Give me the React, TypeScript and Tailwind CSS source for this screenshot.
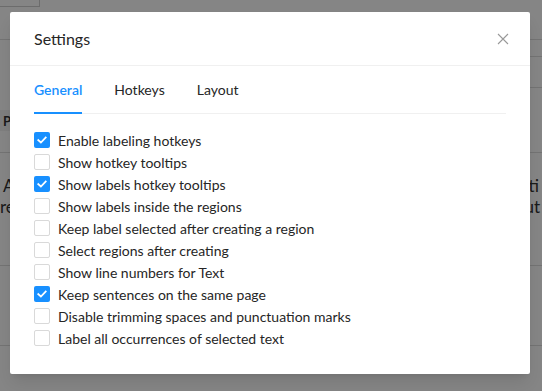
import { useState } from "react";

const OPTIONS: { label: string; checked: boolean }[] = [
  { label: "Enable labeling hotkeys", checked: true },
  { label: "Show hotkey tooltips", checked: false },
  { label: "Show labels hotkey tooltips", checked: true },
  { label: "Show labels inside the regions", checked: false },
  { label: "Keep label selected after creating a region", checked: false },
  { label: "Select regions after creating", checked: false },
  { label: "Show line numbers for Text", checked: false },
  { label: "Keep sentences on the same page", checked: true },
  { label: "Disable trimming spaces and punctuation marks", checked: false },
  { label: "Label all occurrences of selected text", checked: false },
];

const TABS = ["General", "Hotkeys", "Layout"];

function Checkbox({ checked }: { checked: boolean }) {
  return checked ? (
    <span className="flex h-[16px] w-[16px] shrink-0 items-center justify-center rounded-[2px] bg-[#1890ff]">
      <svg width="10" height="8" viewBox="0 0 10 8" fill="none">
        <path d="M1.3 4.1 L3.9 6.5 L8.7 1.5" stroke="white" strokeWidth="1.8" strokeLinecap="square" />
      </svg>
    </span>
  ) : (
    <span className="h-[16px] w-[16px] shrink-0 rounded-[2px] border border-[#d9d9d9] bg-white" />
  );
}

export default function App() {
  const [tab, setTab] = useState("General");
  const [opts, setOpts] = useState(OPTIONS);

  return (
    <div
      className="relative h-[391px] w-[542px] overflow-hidden bg-white"
      style={{ fontFamily: "Lato, 'Open Sans', sans-serif" }}
    >
      {/* page behind the dialog */}
      <div className="flex h-full flex-col text-[#333]">
        <div className="h-[40px] border-b border-[#dcdcdc]">
          <div className="h-[7px] w-[40px] border-r border-b border-[#cfcfcf]" />
        </div>
        <div className="flex h-[113px] border-b border-[#dcdcdc]">
          <div className="flex flex-1 flex-col">
            <div className="h-[70px]" />
            <div className="h-[21px] bg-[#f2f2f2] px-[3px] text-[13px] leading-[23px] font-bold">P</div>
          </div>
          <div className="flex w-[12px] flex-col">
            <div className="h-[17px] border-b border-[#dcdcdc]" />
            <div className="h-[31px] border-b border-[#dcdcdc]" />
          </div>
        </div>
        <div className="flex h-[113px] flex-col border-b border-[#dcdcdc] pt-[22px] text-[17px] leading-[21px]">
          <div className="flex justify-between px-[3px]">
            <span>A</span>
            <span>ti</span>
          </div>
          <div className="flex justify-between pl-0 pr-[2px]">
            <span>re</span>
            <span>ut</span>
          </div>
        </div>
        <div className="h-[80px] border-b border-[#dcdcdc]" />
      </div>

      {/* mask + dialog */}
      <div className="absolute inset-0 bg-black/[0.48]">
        <div className="ml-[10px] mt-[12px] w-[520px] rounded-[2px] bg-white shadow-lg">
          <div className="flex h-[54px] items-center justify-between border-b border-[#f0f0f0] px-6">
            <span className="text-[16px] text-[#262626]">Settings</span>
            <svg width="12" height="12" viewBox="0 0 12 12" className="mr-[-3px]">
              <path d="M1 1 L11 11 M11 1 L1 11" stroke="#999999" strokeWidth="1.1" />
            </svg>
          </div>

          <div className="px-6 pt-[1px] pb-[25px]">
            <div className="flex gap-8 border-b border-[#f0f0f0]">
              {TABS.map((t) => (
                <button
                  key={t}
                  onClick={() => setTab(t)}
                  className={`relative py-[12px] text-[14px] leading-[22px] ${
                    tab === t ? "font-semibold text-[#1890ff]" : "text-[#262626]"
                  }`}
                >
                  {t}
                  {tab === t && (
                    <span className="absolute right-0 bottom-[-1px] left-0 h-[2px] bg-[#1890ff]" />
                  )}
                </button>
              ))}
            </div>

            <div className="mt-[15px] flex flex-col">
              {opts.map((o, i) => (
                <label
                  key={o.label}
                  className="flex h-[22px] cursor-pointer items-center gap-2 text-[14px] text-[#262626]"
                  onClick={() =>
                    setOpts(opts.map((x, j) => (j === i ? { ...x, checked: !x.checked } : x)))
                  }
                >
                  <Checkbox checked={o.checked} />
                  <span>{o.label}</span>
                </label>
              ))}
            </div>
          </div>
        </div>
      </div>
    </div>
  );
}
